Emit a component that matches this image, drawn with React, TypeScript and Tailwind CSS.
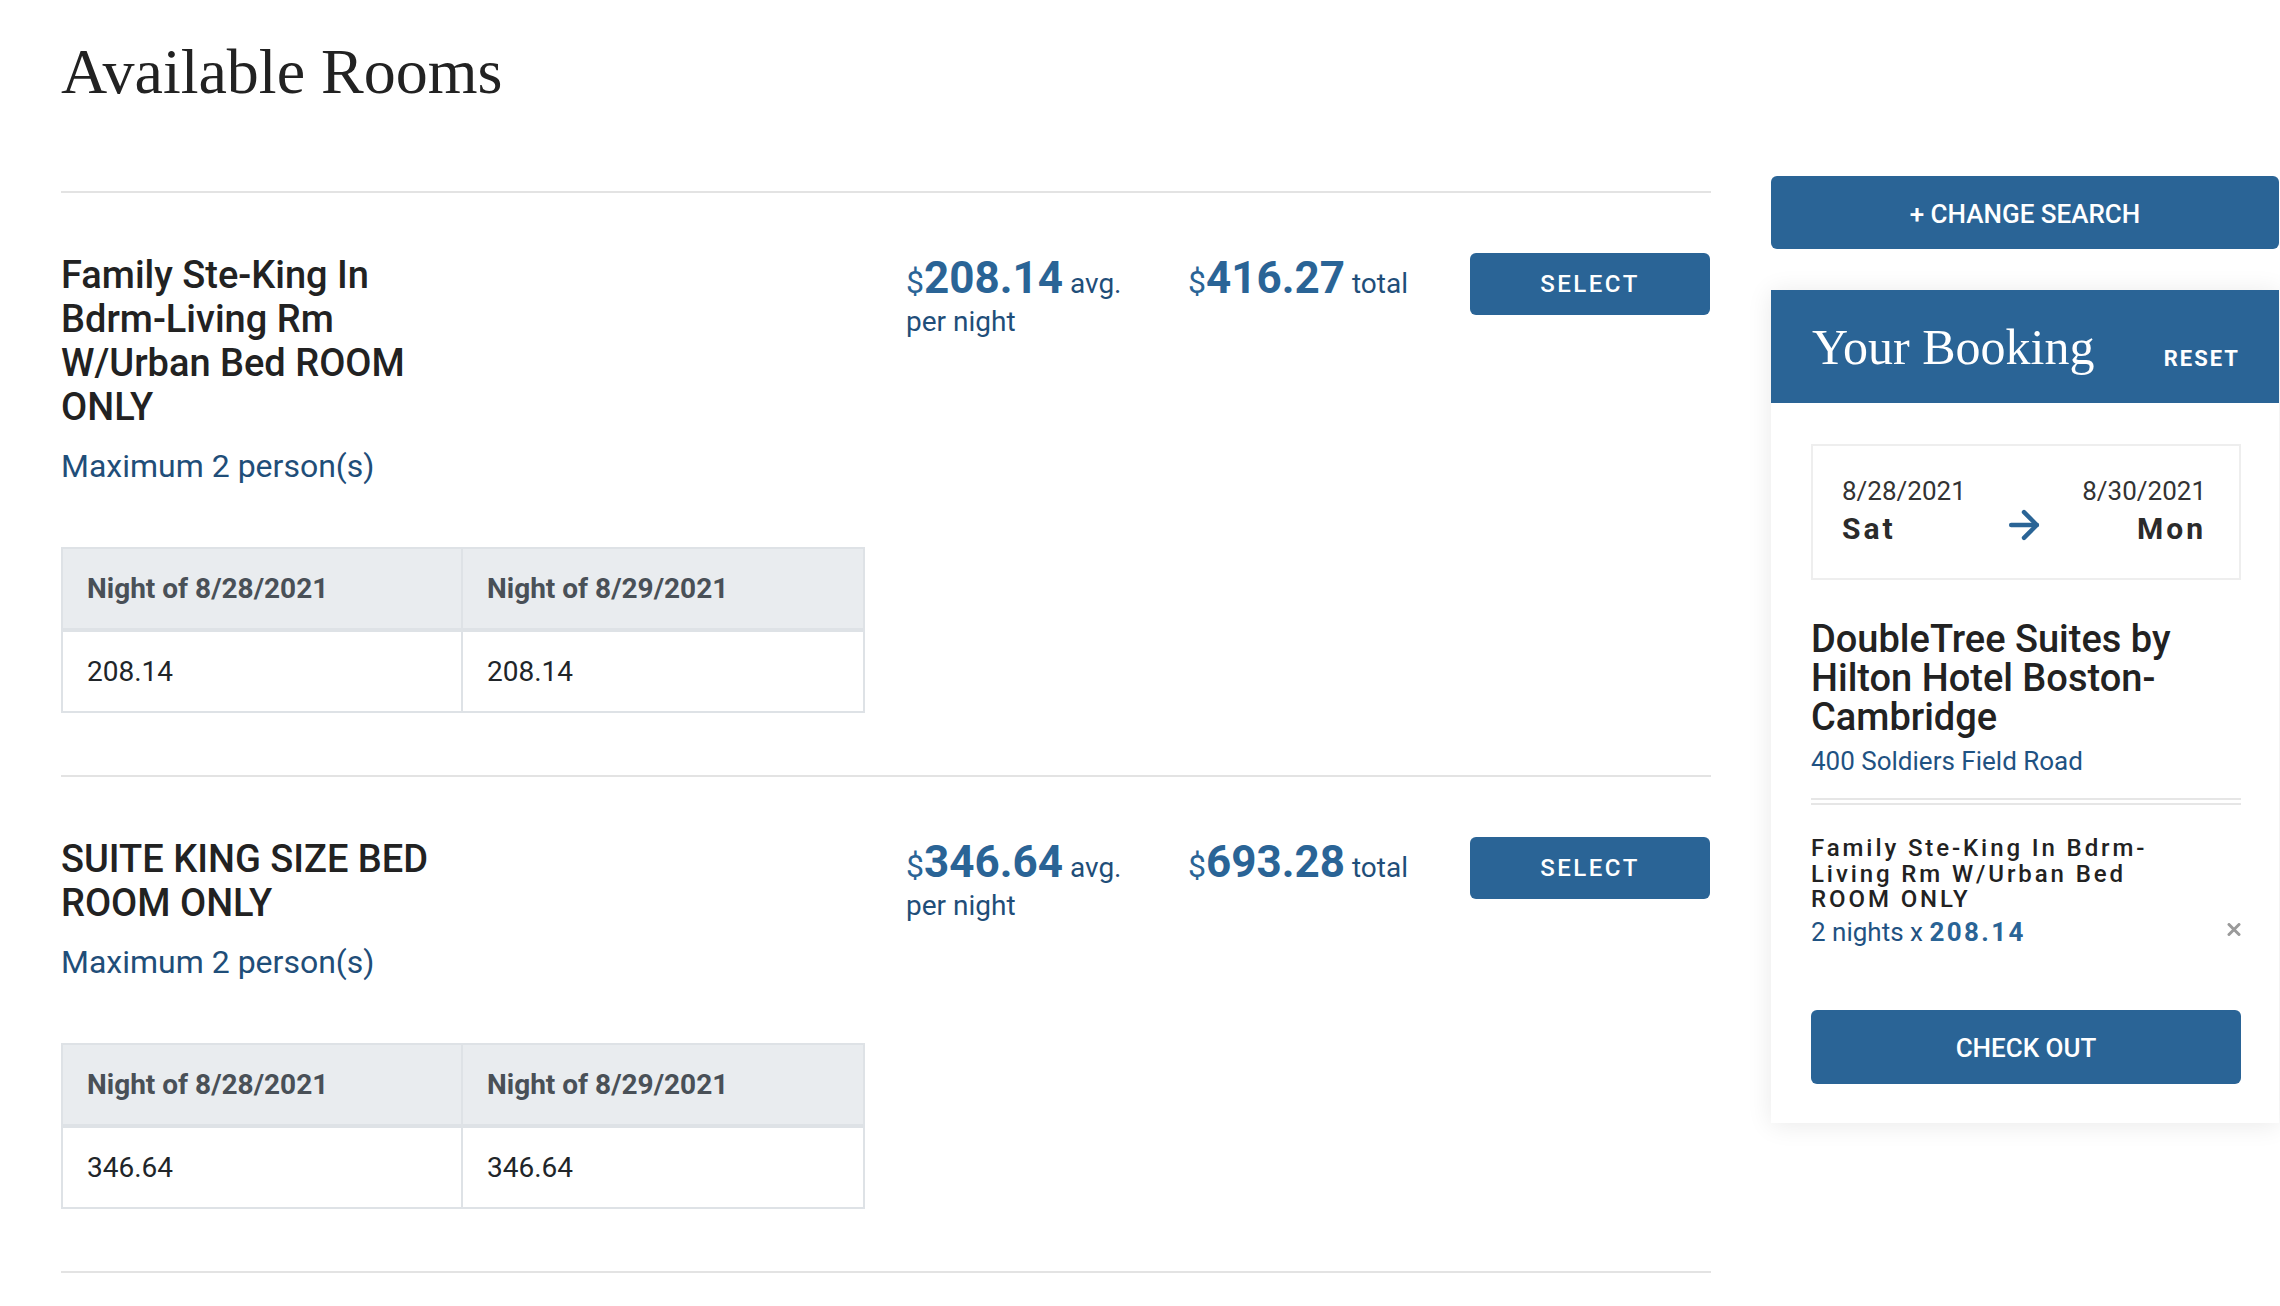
import { ArrowRight } from "lucide-react";

type Night = { date: string; rate: string };

type Room = {
  name: string;
  maxGuests: number;
  avg: string;
  total: string;
  nights: Night[];
};

const ROOMS: Room[] = [
  {
    name: "Family Ste-King In Bdrm-Living Rm W/Urban Bed ROOM ONLY",
    maxGuests: 2,
    avg: "208.14",
    total: "416.27",
    nights: [
      { date: "8/28/2021", rate: "208.14" },
      { date: "8/29/2021", rate: "208.14" },
    ],
  },
  {
    name: "SUITE KING SIZE BED ROOM ONLY",
    maxGuests: 2,
    avg: "346.64",
    total: "693.28",
    nights: [
      { date: "8/28/2021", rate: "346.64" },
      { date: "8/29/2021", rate: "346.64" },
    ],
  },
];

function Price({ amount, label }: { amount: string; label: string }) {
  return (
    <div className="flex items-baseline pt-[2px] text-[#2a6496]">
      <span className="text-[32px] leading-none">$</span>
      <span className="text-[44px] font-bold leading-[46px]">{amount}</span>
      <span className="ml-[7px] text-[28px] leading-none text-[#1f4e79]">{label}</span>
    </div>
  );
}

function RoomRow({ room }: { room: Room }) {
  return (
    <div className="flex border-b-2 border-[#e3e3e3] pt-[60px] pb-[62px]">
      <div className="w-[845px] shrink-0">
        <h2 className="w-[392px] text-[38px] font-medium leading-[44px] text-[#222]">{room.name}</h2>
        <p className="mt-[13px] text-[32px] leading-[48px] text-[#1f4e79]">
          Maximum {room.maxGuests} person(s)
        </p>

        <table className="mt-[57px] w-[804px] border-separate border-spacing-0 border-2 border-[#dee2e6] text-[28px]">
          <thead>
            <tr className="bg-[#e9ecef]">
              {room.nights.map((n, i) => (
                <th
                  key={n.date}
                  className={`w-1/2 border-b-4 border-[#dee2e6] px-[24px] py-[22px] text-left font-bold leading-[35px] text-[#495057] ${
                    i === 0 ? "border-r-2" : ""
                  }`}
                >
                  Night of {n.date}
                </th>
              ))}
            </tr>
          </thead>
          <tbody>
            <tr>
              {room.nights.map((n, i) => (
                <td
                  key={n.date}
                  className={`border-[#dee2e6] px-[24px] py-[22px] leading-[35px] text-[#212529] ${
                    i === 0 ? "border-r-2" : ""
                  }`}
                >
                  {n.rate}
                </td>
              ))}
            </tr>
          </tbody>
        </table>
      </div>

      <div className="w-[282px] shrink-0">
        <Price amount={room.avg} label="avg." />
        <div className="text-[28px] leading-[42px] text-[#1f4e79]">per night</div>
      </div>

      <div className="w-[282px] shrink-0">
        <Price amount={room.total} label="total" />
      </div>

      <button
        type="button"
        className="h-[62px] w-[240px] shrink-0 rounded-[6px] bg-[#2a6496] text-[24px] font-medium tracking-[2.5px] text-white"
      >
        SELECT
      </button>
    </div>
  );
}

function BookingCard() {
  return (
    <div className="mt-[41px] bg-white shadow-[0_2px_24px_rgba(0,0,0,0.09)]">
      <div className="flex h-[113px] items-center justify-between bg-[#2a6496] pr-[39px] pl-[41px] text-white">
        <h2 className="font-['Liberation_Serif',serif] text-[50px] leading-none">Your Booking</h2>
        <button type="button" className="mt-[24px] text-[22px] font-bold tracking-[2px]">
          RESET
        </button>
      </div>

      <div className="pt-[41px] pr-[38px] pb-[39px] pl-[40px]">
        {/* stay dates */}
        <div className="flex items-center justify-between border-2 border-[#eeeeee] pt-[26px] pr-[33px] pb-[31px] pl-[29px] text-[#2b2b2b]">
          <div>
            <div className="text-[26px] leading-[39px] text-[#333]">8/28/2021</div>
            <div className="text-[30px] font-bold leading-[36px] tracking-[3px]">Sat</div>
          </div>
          <ArrowRight className="mt-[30px] text-[#2a6496]" size={44} strokeWidth={2.4} />
          <div className="text-right">
            <div className="text-[26px] leading-[39px] text-[#333]">8/30/2021</div>
            <div className="text-[30px] font-bold leading-[36px] tracking-[3px]">Mon</div>
          </div>
        </div>

        <h3 className="mt-[40px] text-[38px] font-medium leading-[39px] text-[#222]">
          DoubleTree Suites by Hilton Hotel Boston-Cambridge
        </h3>
        <p className="mt-[5px] text-[26px] leading-[39px] text-[#1f5282]">400 Soldiers Field Road</p>

        <div className="mt-[17px] h-[7px] border-y-2 border-[#e6e6e6]" />

        <div className="mt-[31px] flex items-end justify-between">
          <div className="w-[370px]">
            <p className="text-[24px] font-medium leading-[25.5px] tracking-[2.9px] text-[#222]">
              Family Ste-King In Bdrm-Living Rm W/Urban Bed ROOM ONLY
            </p>
            <p className="text-[26px] leading-[39px] text-[#1f5282]">
              2 nights x <span className="font-bold tracking-[2.4px] text-[#2a6496]">208.14</span>
            </p>
          </div>
          <button type="button" className="mb-[16px] text-[#9a9a9a]" aria-label="Remove">
            <svg width="14" height="13" viewBox="0 0 14 13">
              <path d="M2 1.5 L12 11.5 M12 1.5 L2 11.5" stroke="currentColor" strokeWidth="3" strokeLinecap="round" />
            </svg>
          </button>
        </div>

        <button
          type="button"
          className="mt-[58px] h-[74px] w-full rounded-[6px] bg-[#2a6496] pt-[3px] text-[26px] font-medium text-white"
        >
          CHECK OUT
        </button>
      </div>
    </div>
  );
}

export default function App() {
  return (
    <div className="min-h-screen bg-white font-['Roboto',sans-serif] text-[#212529]">
      <div className="flex gap-[60px] pl-[61px]">
        <main className="w-[1650px] shrink-0">
          <h1 className="pt-[37px] font-['Liberation_Serif',serif] text-[64px] leading-[70px] text-[#222]">
            Available Rooms
          </h1>
          <div className="mt-[84px] border-t-2 border-[#e3e3e3]">
            {ROOMS.map((room) => (
              <RoomRow key={room.name} room={room} />
            ))}
          </div>
        </main>

        <aside className="mt-[176px] w-[508px] shrink-0">
          <button
            type="button"
            className="h-[73px] w-full rounded-[6px] bg-[#2a6496] pt-[3px] text-[26px] font-medium text-white"
          >
            + CHANGE SEARCH
          </button>
          <BookingCard />
        </aside>
      </div>
    </div>
  );
}
